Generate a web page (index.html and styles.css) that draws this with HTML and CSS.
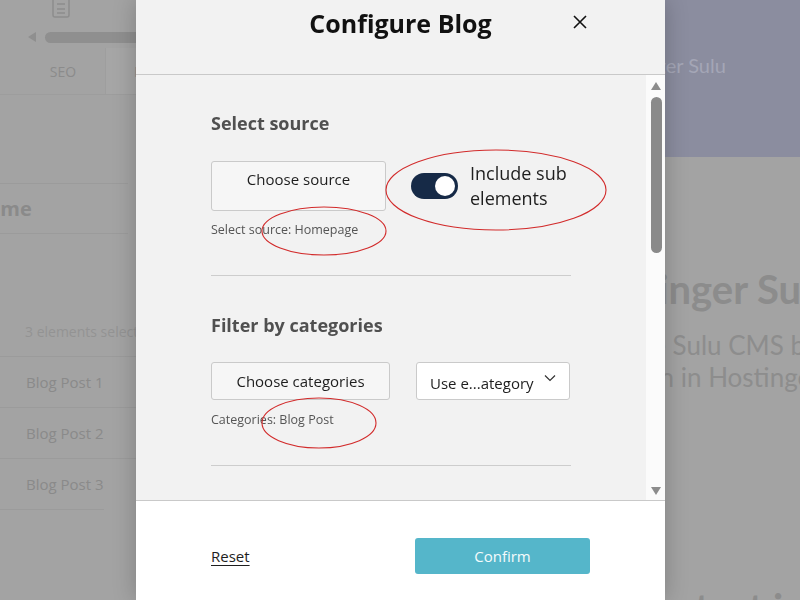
FILE: index.html
```html
<!DOCTYPE html>
<html lang="en">
<head>
<meta charset="utf-8">
<title>Configure Blog</title>
<link rel="stylesheet" href="styles.css">
</head>
<body>
<div class="app">
  <aside class="side">
    <div class="toolbar">
      <svg class="doc-icon" width="20" height="20" viewBox="0 0 20 20" fill="none" stroke="#8d8d8d" stroke-width="1.5">
        <rect x="2" y="-8" width="16" height="25" rx="2"/>
        <path d="M6 4h8M6 9h8M6 13h8"/>
      </svg>
    </div>
    <div class="hscroll">
      <span class="hs-arrow"></span>
      <span class="hs-gap"></span>
      <span class="hs-bar"></span>
    </div>
    <nav class="tabs">
      <span class="tab">SEO</span>
      <span class="tab tab-active">Excerpt &amp; Taxonomies</span>
    </nav>
    <div class="table">
      <div class="thead"><span class="th-name">Name</span></div>
      <div class="selection">3 elements selected</div>
      <div class="trow">Blog Post 1</div>
      <div class="trow">Blog Post 2</div>
      <div class="trow trow-last">Blog Post 3</div>
    </div>
  </aside>
  <main class="preview">
    <div class="hero"><div class="hero-title">Hostinger Sulu</div></div>
    <h1 class="pv-title">Hostinger Sulu</h1>
    <p class="pv-sub">Try the Sulu CMS built<br>and run in Hostinger</p>
    <h2 class="pv-latest">Latest insights</h2>
  </main>
</div>

<div class="overlay">
  <div class="modal">
    <header class="m-head">
      <span></span>
      <h1 class="m-title">Configure Blog</h1>
      <button class="m-close" aria-label="Close">
        <svg width="14" height="14" viewBox="0 0 14 14" stroke="#111" stroke-width="1.6" fill="none"><path d="M1 1L13 13M13 1L1 13"/></svg>
      </button>
    </header>
    <div class="m-body">
      <div class="m-content">
        <section class="m-section">
          <h2 class="m-label">Select source</h2>
          <div class="src-row">
            <button class="btn btn-top">Choose source</button>
            <span class="toggle"><span class="knob"></span></span>
            <span class="toggle-label">Include sub elements</span>
          </div>
          <div class="hint">Select source: Homepage</div>
        </section>
        <section class="m-section">
          <h2 class="m-label">Filter by categories</h2>
          <div class="cat-row">
            <button class="btn btn-cat">Choose categories</button>
            <div class="select">
              <span>Use e...ategory</span>
              <svg width="12" height="8" viewBox="0 0 12 8" fill="none" stroke="#333" stroke-width="1.2"><path d="M1 1.5L6 6.5L11 1.5"/></svg>
            </div>
          </div>
          <div class="hint hint-cat">Categories: Blog Post</div>
        </section>
        <section class="m-section">
          <h2 class="m-label">Sort by</h2>
        </section>
      </div>
      <div class="scrollbar">
        <span class="sb-up"></span>
        <span class="sb-thumb"></span>
        <span class="sb-fill"></span>
        <span class="sb-down"></span>
      </div>
    </div>
    <footer class="m-foot">
      <a class="reset" href="#">Reset</a>
      <button class="confirm">Confirm</button>
    </footer>
  </div>
</div>

<svg class="annotations" width="800" height="600" viewBox="0 0 800 600" fill="none" stroke="#d22b2b" stroke-width="1.1">
  <ellipse cx="496" cy="190" rx="110" ry="40"/>
  <ellipse cx="324" cy="231" rx="62" ry="24"/>
  <ellipse cx="319" cy="423" rx="57" ry="25"/>
</svg>
</body>
</html>
```

FILE: styles.css
```css
html, body {
  margin: 0;
  padding: 0;
}
body {
  width: 800px;
  height: 600px;
  overflow: hidden;
  position: relative;
  font-family: "Open Sans", "Noto Sans", sans-serif;
  background: #a3a3a3;
}

/* ---------- background app (dimmed) ---------- */
.app {
  display: grid;
  grid-template-columns: 420px 1fr;
  height: 600px;
}
.side {
  color: #8b8b8b;
  overflow: hidden;
}
.toolbar {
  height: 26px;
  padding-left: 51px;
}
.doc-icon { display: block; }
.hscroll {
  display: flex;
  align-items: center;
  height: 12px;
  margin-top: 5px;
  padding-left: 28px;
}
.hs-arrow {
  width: 0;
  height: 0;
  border-top: 5px solid transparent;
  border-bottom: 5px solid transparent;
  border-right: 8px solid #8f8f8f;
}
.hs-gap {
  width: 9px;
}
.hs-bar {
  flex: 1;
  height: 11px;
  border-radius: 6px;
  background: #8f8f8f;
}
.tabs {
  display: flex;
  height: 46px;
  margin-top: 5px;
  padding-left: 21px;
  border-bottom: 1px solid #9d9d9d;
  font-size: 14px;
}
.tab {
  width: 84px;
  display: flex;
  align-items: center;
  justify-content: center;
}
.tab-active {
  width: auto;
  padding-left: 28px;
  justify-content: flex-start;
  background: #a6a6a6;
  border-left: 1px solid #9e9e9e;
  white-space: nowrap;
}
.table {
  margin-top: 88px;
}
.thead {
  height: 49px;
  border-top: 1px solid #9b9b9b;
  border-bottom: 1px solid #9b9b9b;
  display: flex;
  align-items: center;
  margin-right: 292px;
}
.th-name {
  margin-left: -28px;
  font-weight: 700;
  font-size: 20px;
  color: #8a8a8a;
}
.selection {
  margin-top: 72px;
  height: 50px;
  padding-left: 25px;
  display: flex;
  align-items: center;
  font-size: 14px;
  color: #939393;
  border-bottom: 1px solid #9b9b9b;
  white-space: nowrap;
}
.trow {
  height: 50px;
  padding-left: 26px;
  display: flex;
  align-items: center;
  font-size: 15px;
  color: #8a8a8a;
  border-bottom: 1px solid #9b9b9b;
}
.trow-last {
  margin-right: 316px;
}

.preview {
  font-family: Lato, "Open Sans", sans-serif;
  white-space: nowrap;
  overflow: hidden;
}
.hero {
  height: 157px;
  background: #8b8d9f;
  padding: 52px 0 0 177px;
  box-sizing: border-box;
}
.hero-title {
  font-size: 20px;
  line-height: 26px;
  color: #a4a6b6;
}
.pv-title {
  margin: 108px 0 0 152px;
  font-size: 40px;
  line-height: 48px;
  font-weight: 700;
  color: #8c8c8c;
}
.pv-sub {
  margin: 16px 0 0 167px;
  font-size: 26px;
  line-height: 32px;
  color: #8d8d8d;
}
.pv-latest {
  margin: 191px 0 0 234px;
  font-size: 40px;
  line-height: 48px;
  font-weight: 700;
  color: #8c8c8c;
}

/* ---------- modal ---------- */
.overlay {
  position: fixed;
  inset: 0;
  display: flex;
  justify-content: center;
}
.modal {
  width: 529px;
  height: 600px;
  margin-left: 1px;
  display: flex;
  flex-direction: column;
  background: #f2f2f2;
  box-shadow: 0 0 22px rgba(0, 0, 0, 0.22);
}
.m-head {
  box-sizing: border-box;
  border-bottom: 1px solid #c9c9c9;
  display: grid;
  grid-template-columns: 1fr auto 1fr;
  align-items: start;
  padding: 0 78px;
  flex: none;
  height: 75px;
}
.m-title {
  margin: 6px 0 0;
  font-size: 25px;
  line-height: 34px;
  font-weight: 700;
  color: #111;
}
.m-close {
  justify-self: end;
  margin-top: 15px;
  padding: 0;
  border: 0;
  background: none;
  width: 14px;
  height: 14px;
  display: block;
}
.m-close svg { display: block; }

.m-body {
  flex: 1;
  display: flex;
  min-height: 0;
  overflow: hidden;
}
.m-content {
  flex: 1;
  padding: 36px 0 0 75px;
}
.m-section {
  width: 360px;
  border-bottom: 1px solid #cdcdcd;
  padding-bottom: 37px;
  margin-bottom: 37px;
}
.m-label {
  margin: 0;
  font-size: 18px;
  line-height: 24px;
  font-weight: 700;
  color: #505050;
}
.src-row {
  display: flex;
  align-items: stretch;
  margin-top: 26px;
}
.btn {
  font-family: inherit;
  font-size: 15px;
  line-height: 20px;
  color: #1e1e1e;
  background: #f6f6f6;
  border: 1px solid #cacaca;
  border-radius: 3px;
  padding: 0;
}
.btn-top {
  width: 175px;
  padding-top: 7px;
  display: flex;
  justify-content: center;
  align-items: flex-start;
}
.toggle {
  align-self: center;
  width: 47px;
  height: 26px;
  border-radius: 13px;
  background: #162a47;
  margin-left: 25px;
  display: flex;
  align-items: center;
  justify-content: flex-end;
  padding-right: 3px;
  box-sizing: border-box;
  flex: none;
}
.knob {
  width: 20px;
  height: 20px;
  border-radius: 50%;
  background: #fff;
}
.toggle-label {
  margin-left: 12px;
  flex: 1;
  font-size: 18px;
  line-height: 25px;
  color: #1e1e1e;
}
.hint {
  margin-top: 10px;
  font-size: 12.5px;
  line-height: 17px;
  color: #555;
}
.hint-cat {
  margin-top: 11px;
}
.cat-row {
  display: flex;
  gap: 26px;
  margin-top: 25px;
  height: 38px;
}
.btn-cat {
  width: 179px;
}
.select {
  width: 154px;
  box-sizing: border-box;
  background: #fff;
  border: 1px solid #cacaca;
  border-radius: 3px;
  display: flex;
  align-items: center;
  justify-content: space-between;
  padding: 4px 13px 0 13px;
  font-size: 15px;
  color: #1e1e1e;
}
.select svg { margin-top: -10px; }

.scrollbar {
  width: 19px;
  flex: none;
  background: #fbfbfb;
  display: flex;
  flex-direction: column;
  align-items: center;
  padding: 7px 0 5px 1px;
  box-sizing: border-box;
}
.sb-up, .sb-down {
  width: 0;
  height: 0;
  border-left: 5px solid transparent;
  border-right: 5px solid transparent;
}
.sb-up { border-bottom: 8px solid #8c8c8c; }
.sb-down { border-top: 8px solid #8c8c8c; }
.sb-thumb {
  margin-top: 7px;
  width: 11px;
  height: 156px;
  border-radius: 6px;
  background: #8a8a8a;
}
.sb-fill { flex: 1; }

.m-foot {
  flex: none;
  height: 100px;
  box-sizing: border-box;
  background: #fff;
  border-top: 1px solid #c9c9c9;
  display: flex;
  justify-content: space-between;
  align-items: flex-start;
  padding: 37px 75px 0;
}
.reset {
  margin-top: 8px;
  font-size: 15px;
  line-height: 20px;
  color: #1e1e1e;
  text-decoration: underline;
  text-underline-offset: 3px;
}
.confirm {
  width: 175px;
  height: 36px;
  border: 0;
  border-radius: 3px;
  background: #55b6ca;
  color: #f4fbfc;
  font-family: inherit;
  font-size: 15px;
}

.annotations {
  position: absolute;
  top: 0;
  left: 0;
  pointer-events: none;
}
```
